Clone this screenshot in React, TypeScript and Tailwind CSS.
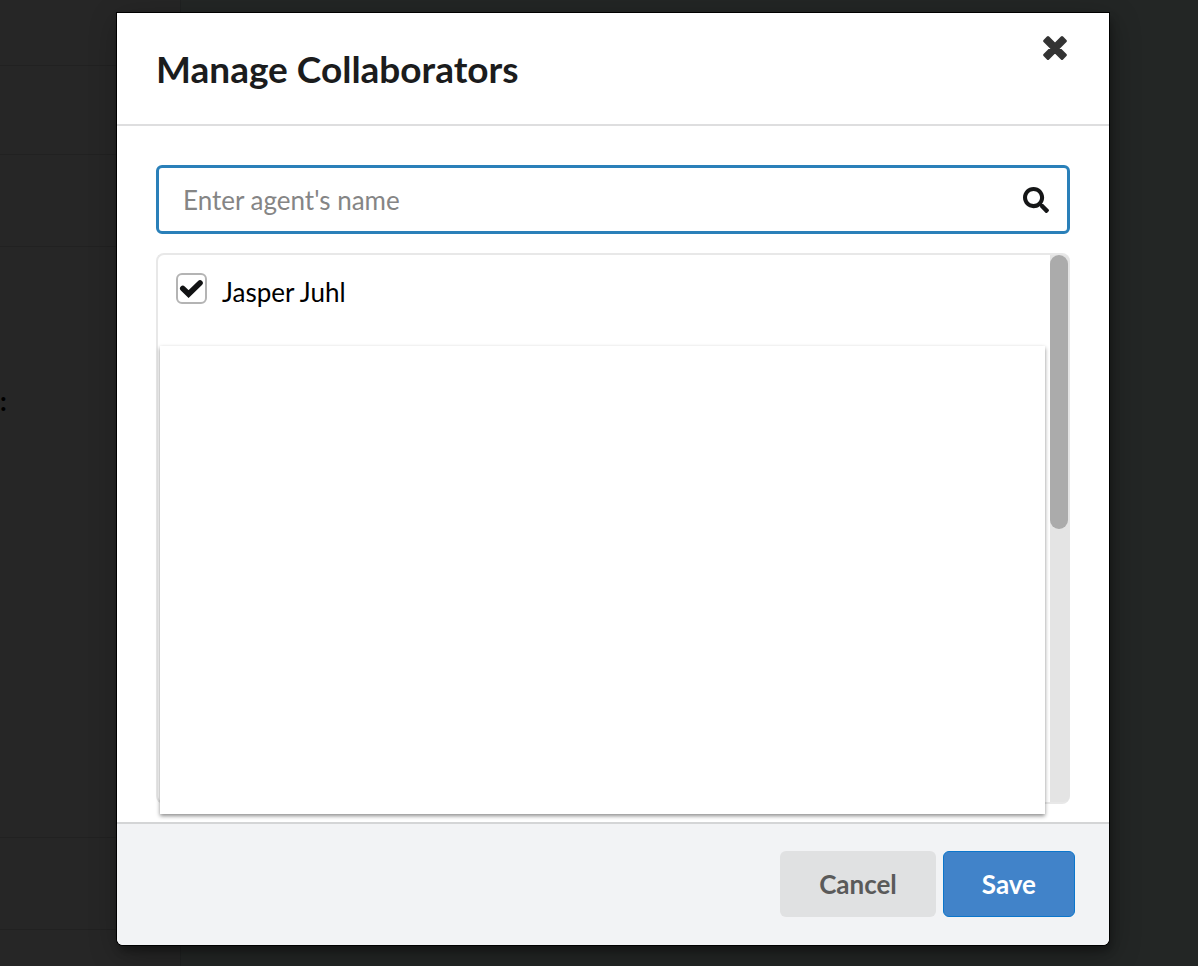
import * as React from 'react';
import { FaSearch } from 'react-icons/fa';

const agents = [{ id: 'jasper-juhl', name: 'Jasper Juhl' }];

const Backdrop: React.FC = () => (
  <div className="flex min-h-screen bg-[#232625]" aria-hidden="true">
    <div className="flex w-[181px] flex-col border-r border-[#1f2121] bg-[#262626]">
      <div className="h-[66px] border-b border-[#212121]" />
      <div className="h-[89px] border-b border-[#212121]" />
      <div className="h-[92px] border-b border-[#212121]" />
      <div className="flex-1 border-b border-[#212121] pt-[138px] text-[26px] leading-8 font-bold text-black">:</div>
      <div className="h-[92px] border-b border-[#212121]" />
      <div className="h-9" />
    </div>
  </div>
);

const CloseIcon: React.FC = () => (
  <svg viewBox="0 0 26 26" className="h-[26px] w-[26px]" fill="currentColor" stroke="currentColor" strokeWidth="3" strokeLinejoin="round">
    <path d="M6 2.6 13 9.6 20 2.6 23.4 6 16.4 13 23.4 20 20 23.4 13 16.4 6 23.4 2.6 20 9.6 13 2.6 6Z" />
  </svg>
);

const AgentRow: React.FC<{ id: string; name: string }> = ({ id, name }) => {
  const [checked, setChecked] = React.useState(true);

  return (
    <div className="flex items-start gap-[15px]">
      <span className="relative block h-[31px] w-[31px]">
        <input
          id={id}
          type="checkbox"
          checked={checked}
          onChange={(e) => setChecked(e.target.checked)}
          className="block h-full w-full appearance-none rounded-md border-2 border-[#b4b4b4] bg-white"
        />
        {checked && (
          <svg viewBox="0 0 31 31" className="pointer-events-none absolute inset-0" fill="none">
            <path d="M6.8 15.4 12.6 21 24 10" stroke="#111213" strokeWidth="5.6" strokeLinecap="round" strokeLinejoin="miter" />
          </svg>
        )}
      </span>
      <label htmlFor={id} className="text-[26px] leading-[38px] text-black">
        {name}
      </label>
    </div>
  );
};

export default function App() {
  const [query, setQuery] = React.useState('');
  const visible = agents.filter((agent) => agent.name.toLowerCase().includes(query.toLowerCase()));

  return (
    <div className="relative font-['Lato',sans-serif]">
      <Backdrop />

      {/* Modal */}
      <div className="absolute inset-0 flex flex-col pt-[13px] pr-[89px] pb-[21px] pl-[117px]">
        <div
          role="dialog"
          aria-labelledby="modal-title"
          className="flex flex-1 flex-col rounded-b-md bg-white shadow-[0_0_0_1px_#000,2px_6px_8px_0_rgba(0,0,0,0.3),2px_8px_30px_0_rgba(0,0,0,0.3)]"
        >
          <header className="flex items-start justify-between border-b-2 border-[#dededf] pt-4 pr-[41px] pb-8 pl-[39px]">
            <h1 id="modal-title" className="pt-4 text-[37px] leading-[47px] font-bold text-[#1b1c1d]">
              Manage Collaborators
            </h1>
            <button type="button" aria-label="Close" className="flex h-[38px] items-center text-[#333]">
              <CloseIcon />
            </button>
          </header>

          <div className="flex flex-1 flex-col gap-[19px] px-[39px] pt-[39px] pb-[18px]">
            <div className="flex h-[69px] items-center rounded-md border-[3px] border-[#2a80b9] pr-[18px] pl-6">
              <input
                type="text"
                aria-label="Agent's name"
                placeholder="Enter agent's name"
                value={query}
                onChange={(e) => setQuery(e.target.value)}
                className="min-w-0 flex-1 text-[26px] leading-8 text-black outline-none placeholder:text-[#858585]"
              />
              <FaSearch className="h-[26px] w-[26px] text-[#151617]" />
            </div>

            <div className="flex flex-1 rounded-lg border-2 border-r-0 border-[#e8e8e8]">
              <div className="relative mr-[5px] flex-1 pt-[18px] pl-[18px]">
                {visible.map((agent) => (
                  <AgentRow key={agent.id} id={agent.id} name={agent.name} />
                ))}
                <div className="absolute top-[91px] right-0 -bottom-3 left-0.5 bg-white shadow-[0_2px_4px_0_rgba(0,0,0,0.45)]" />
              </div>
              <div className="w-5 rounded-r-md bg-[#e4e4e4]">
                <div className="h-1/2 w-[18px] rounded-full bg-[#ababab]" />
              </div>
            </div>
          </div>

          <footer className="flex justify-end gap-[7px] rounded-b-md border-t-2 border-[#d4d5d6] bg-[#f2f3f5] pt-[27px] pr-[34px] pb-7">
            <button type="button" className="h-[66px] rounded-md bg-[#e0e1e2] px-[39px] text-[26px] leading-8 font-bold text-[#5a5a5a]">
              Cancel
            </button>
            <button type="button" className="h-[66px] rounded-md border border-[#0b76cc] bg-[#4183c9] px-[38px] text-[26px] leading-8 font-bold text-white">
              Save
            </button>
          </footer>
        </div>
      </div>
    </div>
  );
}
